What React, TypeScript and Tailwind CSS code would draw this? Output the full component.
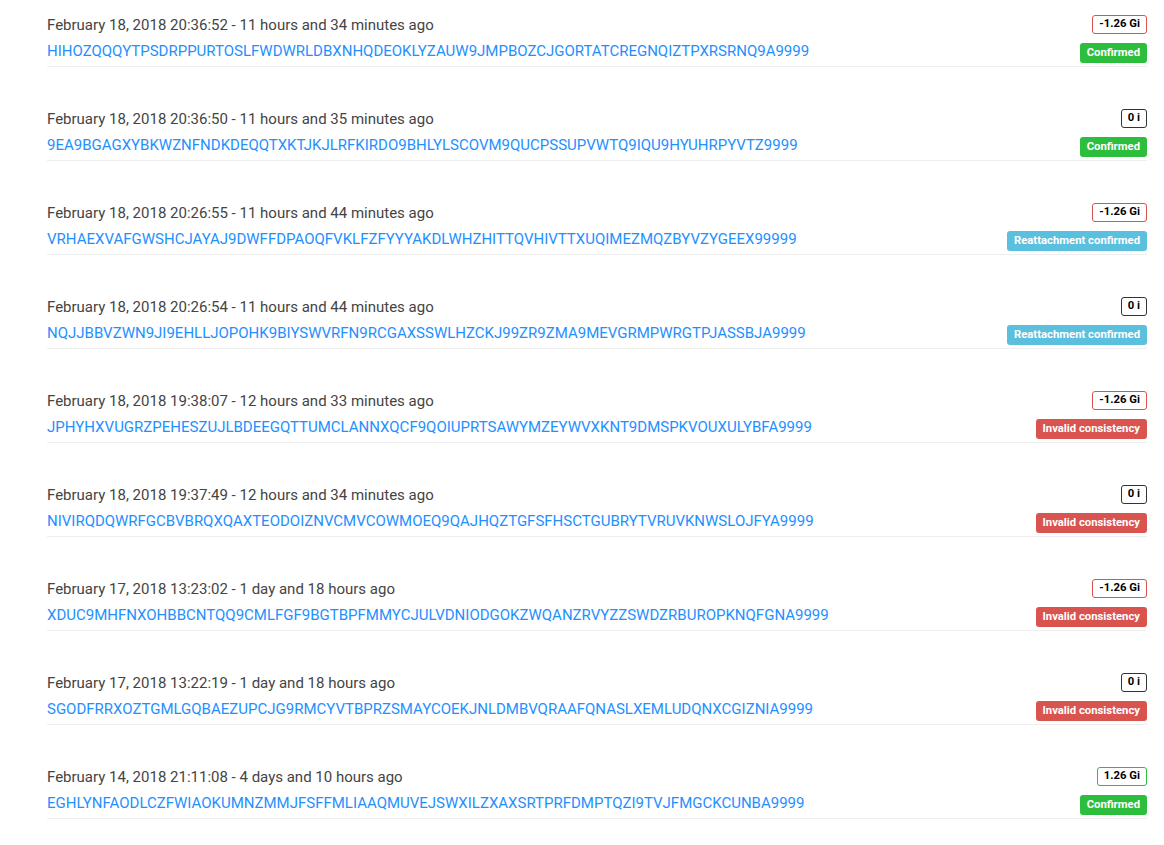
import React from 'react'

type Status = 'confirmed' | 'reattached' | 'invalid'

interface Tx {
  date: string
  ago: string
  hash: string
  value: string
  status: Status
}

const txs: Tx[] = [
  { date: 'February 18, 2018 20:36:52', ago: '11 hours and 34 minutes ago', hash: 'HIHOZQQQYTPSDRPPURTOSLFWDWRLDBXNHQDEOKLYZAUW9JMPBOZCJGORTATCREGNQIZTPXRSRNQ9A9999', value: '-1.26 Gi', status: 'confirmed' },
  { date: 'February 18, 2018 20:36:50', ago: '11 hours and 35 minutes ago', hash: '9EA9BGAGXYBKWZNFNDKDEQQTXKTJKJLRFKIRDO9BHLYLSCOVM9QUCPSSUPVWTQ9IQU9HYUHRPYVTZ9999', value: '0 i', status: 'confirmed' },
  { date: 'February 18, 2018 20:26:55', ago: '11 hours and 44 minutes ago', hash: 'VRHAEXVAFGWSHCJAYAJ9DWFFDPAOQFVKLFZFYYYAKDLWHZHITTQVHIVTTXUQIMEZMQZBYVZYGEEX99999', value: '-1.26 Gi', status: 'reattached' },
  { date: 'February 18, 2018 20:26:54', ago: '11 hours and 44 minutes ago', hash: 'NQJJBBVZWN9JI9EHLLJOPOHK9BIYSWVRFN9RCGAXSSWLHZCKJ99ZR9ZMA9MEVGRMPWRGTPJASSBJA9999', value: '0 i', status: 'reattached' },
  { date: 'February 18, 2018 19:38:07', ago: '12 hours and 33 minutes ago', hash: 'JPHYHXVUGRZPEHESZUJLBDEEGQTTUMCLANNXQCF9QOIUPRTSAWYMZEYWVXKNT9DMSPKVOUXULYBFA9999', value: '-1.26 Gi', status: 'invalid' },
  { date: 'February 18, 2018 19:37:49', ago: '12 hours and 34 minutes ago', hash: 'NIVIRQDQWRFGCBVBRQXQAXTEODOIZNVCMVCOWMOEQ9QAJHQZTGFSFHSCTGUBRYTVRUVKNWSLOJFYA9999', value: '0 i', status: 'invalid' },
  { date: 'February 17, 2018 13:23:02', ago: '1 day and 18 hours ago', hash: 'XDUC9MHFNXOHBBCNTQQ9CMLFGF9BGTBPFMMYCJULVDNIODGOKZWQANZRVYZZSWDZRBUROPKNQFGNA9999', value: '-1.26 Gi', status: 'invalid' },
  { date: 'February 17, 2018 13:22:19', ago: '1 day and 18 hours ago', hash: 'SGODFRRXOZTGMLGQBAEZUPCJG9RMCYVTBPRZSMAYCOEKJNLDMBVQRAAFQNASLXEMLUDQNXCGIZNIA9999', value: '0 i', status: 'invalid' },
  { date: 'February 14, 2018 21:11:08', ago: '4 days and 10 hours ago', hash: 'EGHLYNFAODLCZFWIAOKUMNZMMJFSFFMLIAAQMUVEJSWXILZXAXSRTPRFDMPTQZI9TVJFMGCKCUNBA9999', value: '1.26 Gi', status: 'confirmed' },
]

// value badge border follows the sign of the amount
function valueBorder(value: string) {
  if (value.startsWith('-')) return 'border-[#d9534f]'
  if (value === '0 i') return 'border-[#333333]'
  return 'border-[#2cbe3c]'
}

const statusLabel: Record<Status, string> = {
  confirmed: 'Confirmed',
  reattached: 'Reattachment confirmed',
  invalid: 'Invalid consistency',
}

const statusClass: Record<Status, string> = {
  confirmed: 'bg-[#2cbe3c]',
  reattached: 'bg-[#5bc0de]',
  invalid: 'bg-[#d9534f]',
}

const TxRow = ({ tx }: { tx: Tx }) => (
  <div className="flex items-start justify-between border-b border-[#eeeeee] pb-[3px] mb-[42px]">
    <div className="flex flex-col">
      <div className="text-[15px] leading-5 text-[#444444]">
        {tx.date} - {tx.ago}
      </div>
      <a className="mt-[6px] text-[15px] leading-5 text-[#1e90ff] cursor-pointer">{tx.hash}</a>
    </div>
    <div className="flex flex-col items-end">
      <span
        className={`border ${valueBorder(tx.value)} rounded-[3px] bg-white px-[6px] h-[19px] flex items-center text-[11.3px] font-bold text-black`}
      >
        {tx.value}
      </span>
      <span
        className={`mt-[9px] ${statusClass[tx.status]} rounded-[3px] px-[7px] h-[20px] flex items-center text-[11.3px] font-bold text-white`}
      >
        {statusLabel[tx.status]}
      </span>
    </div>
  </div>
)

export default function App() {
  return (
    <div className="w-[1164px] h-[845px] bg-white overflow-hidden" style={{ fontFamily: 'Roboto, "Liberation Sans", sans-serif' }}>
      <div className="ml-[47px] mr-[17px] pt-[15px]">
        {txs.map((tx) => (
          <TxRow key={tx.hash} tx={tx} />
        ))}
      </div>
    </div>
  )
}
